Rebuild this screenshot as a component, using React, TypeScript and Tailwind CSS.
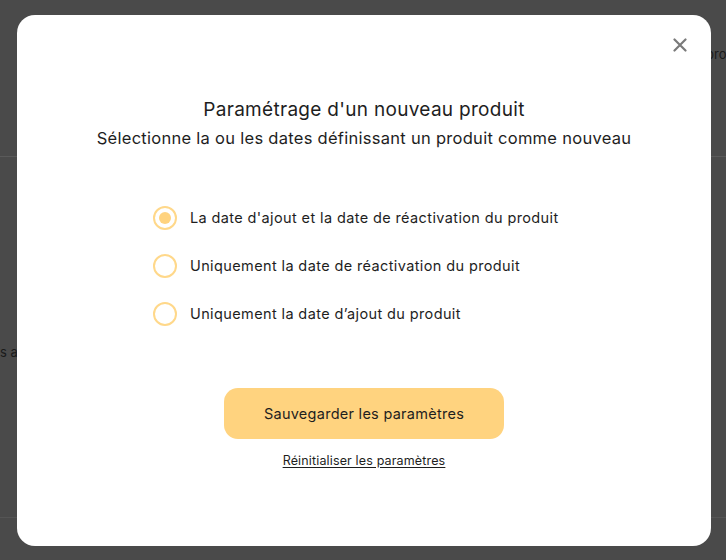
import { useState } from 'react';

const options = [
  "La date d'ajout et la date de réactivation du produit",
  'Uniquement la date de réactivation du produit',
  'Uniquement la date d’ajout du produit',
];

export default function App() {
  const [selected, setSelected] = useState(0);

  return (
    <div className="relative h-[560px] w-[726px] overflow-hidden bg-[#4a4a4a] font-['Inter',sans-serif]">
      {/* page behind the overlay */}
      <div className="absolute left-0 right-0 top-[156px] h-px bg-[#5a5a5a]" />
      <div className="absolute left-0 right-0 top-[517px] h-px bg-[#555555]" />
      <span className="absolute left-[706px] top-[45px] text-[13px] text-[#1a1a1a]">pro</span>
      <span className="absolute left-0 top-[343px] text-[13px] text-[#1a1a1a]">s aj</span>

      {/* modal */}
      <div className="absolute left-[17px] top-[15px] flex h-[531px] w-[694px] flex-col items-center rounded-[18px] bg-white">
        <button className="absolute right-[24px] top-[23px] text-[#7a7a7a]">
          <svg width="14" height="14" viewBox="0 0 14 14" fill="none" stroke="currentColor" strokeWidth="2.2" strokeLinecap="round">
            <path d="M1.5 1.5 12.5 12.5M12.5 1.5 1.5 12.5" />
          </svg>
        </button>

        <h2 className="mt-[82px] text-[19px] leading-[26px] tracking-[0.3px] text-[#1e1e1e]">Paramétrage d'un nouveau produit</h2>
        <p className="mt-[4px] text-[16.5px] leading-[22px] tracking-[0.28px] text-[#1e1e1e]">Sélectionne la ou les dates définissant un produit comme nouveau</p>

        <div className="mt-[57px] flex flex-col gap-[24px] self-start pl-[136px]">
          {options.map((label, i) => (
            <label key={i} className="flex cursor-pointer items-center gap-[13px]" onClick={() => setSelected(i)}>
              <span className="flex h-[24px] w-[24px] items-center justify-center rounded-full border-[2.5px] border-[#ffd88a]">
                {selected === i && <span className="h-[12px] w-[12px] rounded-full bg-[#ffd37f]" />}
              </span>
              <span className="text-[14.5px] leading-[24px] tracking-[0.38px] text-[#1e1e1e]">{label}</span>
            </label>
          ))}
        </div>

        <button className="mt-[62px] h-[51px] w-[280px] rounded-[14px] bg-[#ffd37f] text-[14.5px] tracking-[0.27px] text-[#1e1e1e]">
          Sauvegarder les paramètres
        </button>
        <button className="mt-[13px] text-[12.5px] tracking-[0.15px] text-[#1e1e1e] underline underline-offset-2">Réinitialiser les paramètres</button>
      </div>
    </div>
  );
}
